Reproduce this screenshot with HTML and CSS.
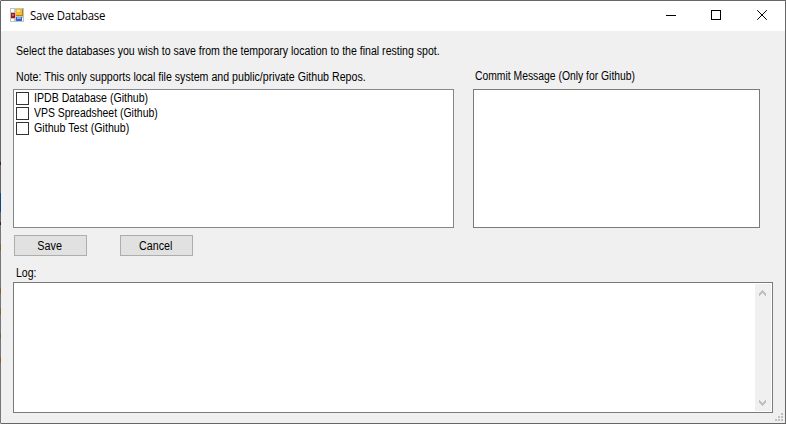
FILE: index.html
```html
<!DOCTYPE html>
<html lang="en">
<head>
<meta charset="utf-8">
<title>Save Database</title>
<link rel="stylesheet" href="styles.css">
</head>
<body>
<main class="window">
  <header class="titlebar">
    <svg class="app-icon" width="14" height="14" viewBox="0 0 14 14" shape-rendering="crispEdges">
      <path fill="#c3c3c3" d="M0 0h14v14H0z"/>
      <path fill="#fff" d="M1 1h3v3H1zM1 11h3v2H1zM12 10h1v3h-1z"/>
      <path fill="#a11812" d="M1 5h4v5H1z"/><path fill="#d8614c" d="M2 6h2v2H2z"/>
      <path fill="#b8800c" d="M6 1h7v7H6z"/><path fill="#f5bf2c" d="M6 1h6v6H6z"/><path fill="#ffe28a" d="M7 2h3v2H7z"/>
      <path fill="#2f69c8" d="M6 9h6v4H6z"/><path fill="#7db0f4" d="M7 9h4v2H7z"/>
    </svg>
    <h1 class="title"><span class="t-title">Save Database</span></h1>
    <svg class="controls" width="138" height="30" viewBox="0 0 138 30" fill="none" stroke="#000">
      <path d="M19 14.500h10M64.500 9.500h9v9h-9z" shape-rendering="crispEdges"/>
      <path d="M110.200 9.200l9.600 9.600M119.800 9.200l-9.600 9.600" stroke-width="1"/>
    </svg>
  </header>
  <section class="content">
    <p class="label intro"><span class="t-intro">Select the databases you wish to save from the temporary location to the final resting spot.</span></p>
    <div class="columns">
      <div class="databases">
        <p class="label note"><span class="t-note">Note: This only supports local file system and public/private Github Repos.</span></p>
        <ul class="box list">
          <li><i class="check"></i><span class="t-one">IPDB Database (Github)</span></li>
          <li><i class="check"></i><span class="t-two">VPS Spreadsheet (Github)</span></li>
          <li><i class="check"></i><span class="t-three">Github Test (Github)</span></li>
        </ul>
      </div>
      <div class="commit">
        <p class="label commit-label"><span class="t-commit">Commit Message (Only for Github)</span></p>
        <div class="box message"></div>
      </div>
    </div>
    <div class="buttons">
      <button class="btn"><span class="t-save">Save</span></button>
      <button class="btn"><span class="t-cancel">Cancel</span></button>
    </div>
    <p class="label log-label"><span class="t-log">Log:</span></p>
    <div class="box log">
      <div class="scrollbar">
        <svg width="7" height="6" viewBox="0 0 7 6" fill="#bfbfbf" shape-rendering="crispEdges"><path d="M3 0h1v1h1v1h1v1h1v3H6V5H5V4H4V3H3v1H2v1H1v1H0V3h1V2h1V1h1z"/></svg>
        <svg width="7" height="6" viewBox="0 0 7 6" fill="#bfbfbf" shape-rendering="crispEdges"><path d="M0 0h1v1h1v1h1v1h1V2h1V1h1V0h1v3H6v1H5v1H4v1H3V5H2V4H1V3H0z"/></svg>
      </div>
    </div>
  </section>
  <svg class="grip" width="8" height="8" viewBox="0 0 8 8" fill="#bfbfbf" shape-rendering="crispEdges"><path d="M6 0h2v2H6zM3 3h2v2H3zM6 3h2v2H6zM0 6h2v2H0zM3 6h2v2H3zM6 6h2v2H6z"/></svg>
</main>
</body>
</html>
```
FILE: styles.css
```css
* { box-sizing: border-box; margin: 0; padding: 0; }
body { width: 786px; height: 424px; overflow: hidden; }
.window {
  position: relative;
  width: 786px;
  height: 424px;
  border: 1px solid #666;
  border-left-color: transparent;
  background:
    linear-gradient(#f0f0f0, #f0f0f0) padding-box,
    linear-gradient(#666 0 162px, #3a2030 162px 165px, #666 165px 193px, #12487c 193px 212px, #666 212px 222px, #3a2030 222px 225px, #777 225px 244px, #80603c 244px 250px, #777 250px 288px, #80603c 288px 294px, #777 294px 308px, #80603c 308px 314px, #777 314px 333px, #80603c 333px 339px, #777 339px 357px, #80603c 357px 363px, #777 363px) border-box;
  color: #000;
  font: 12px/13px "Liberation Sans", Arial, sans-serif;
}
.titlebar { display: flex; height: 30px; background: #fff; padding-left: 9px; }
.app-icon { margin-top: 7px; }
.title { flex: 1; margin-left: 6px; font: 12px/30px "Open Sans", "Noto Sans", sans-serif; letter-spacing: -0.2px; }
.content { padding: 14px 12px 0; }
.label { height: 13px; white-space: nowrap; padding-left: 3px; }
.intro { margin-bottom: 12px; }
.columns { display: flex; gap: 19px; }
.databases { width: 441px; }
.commit { width: 287px; }
.note { margin: 1px 0 5px; }
.commit-label { padding-left: 2px; margin-bottom: 6px; }
.box { border: 1px solid #7a7a7a; background: #fff; }
.list, .message { height: 139px; }
.list { list-style: none; padding: 1px 2px; border-color: #828790; }
.list li { display: flex; height: 15px; white-space: nowrap; line-height: 15px; }
.check { width: 13px; height: 13px; margin: 1px 5px 0 0; border: 1px solid #333; background: #fff; }
.buttons { display: flex; gap: 33px; padding: 7px 0 0 1px; }
.btn { width: 73px; height: 21px; padding-top: 2px; border: 1px solid #adadad; background: #e1e1e1; font: inherit; color: inherit; }
.log-label { margin: 11px 0 2px; }
.log { display: flex; justify-content: flex-end; width: 760px; height: 131px; padding: 1px; }
.scrollbar { display: flex; flex-direction: column; justify-content: space-between; width: 16px; background: #f0f0f0; padding: 6px 0 5px 4px; }
.grip { position: absolute; right: 2px; bottom: 2px; }

/* Condensed dialog lettering */
.window span { display: inline-block; transform-origin: 0 50%; }
.window .btn span { transform-origin: 50% 50%; margin-left: -2px; }
.t-title { transform: scaleX(0.95); }
.t-intro { transform: scaleX(0.881); }
.t-note { transform: scaleX(0.886); }
.t-commit { transform: scaleX(0.863); }
.t-one { transform: scaleX(0.882); }
.t-two { transform: scaleX(0.871); }
.t-three { transform: scaleX(0.889); }
.t-save { transform: scaleX(0.9); }
.t-cancel { transform: scaleX(0.89); }
.t-log { transform: scaleX(0.88); }
```
